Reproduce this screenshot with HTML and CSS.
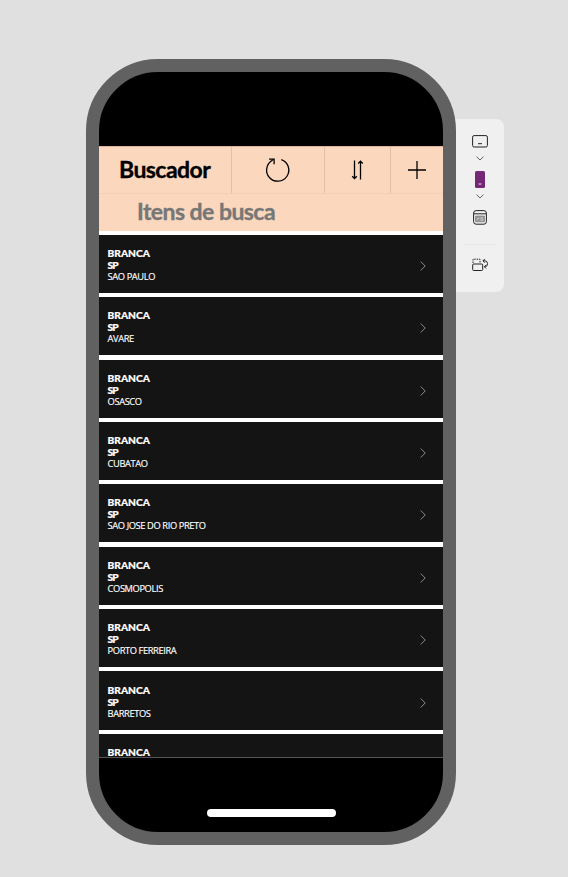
FILE: index.html
```
<!DOCTYPE html>
<html lang="pt-BR">
<head>
<meta charset="utf-8">
<title>Buscador</title>
<link rel="stylesheet" href="styles.css">
</head>
<body>
<main class="stage">
  <section class="phone">
    <header class="toolbar">
      <h1 class="title">Buscador</h1>
      <button class="tool refresh" aria-label="Atualizar"><svg width="28" height="28" viewBox="0 0 28 28"><path d="M8.7 4.2A11.1 11.1 0 1 0 17.3 3.6M5.1 3.1H10.1V8.3"/></svg></button>
      <button class="tool sort" aria-label="Ordenar"><svg width="14" height="22" viewBox="0 0 14 22"><path d="M4.500 1.500V19.200M2.200 17.200L4.500 19.500L6.800 17.200M10.500 20.500V2.500M8.200 4.500L10.500 2.200L12.800 4.500"/></svg></button>
      <button class="tool add" aria-label="Adicionar"><svg width="20" height="20" viewBox="0 0 20 20"><path d="M10 1V19M1 10H19"/></svg></button>
    </header>
    <div class="search">Itens de busca</div>
    <div class="list">
      <article class="row"><div><h2>BRANCA</h2><h3>SP</h3><p>SAO PAULO</p></div><svg class="next" viewBox="0 0 6 10"><path d="M.7.5L5.200 5L.7 9.500"/></svg></article>
      <article class="row"><div><h2>BRANCA</h2><h3>SP</h3><p>AVARE</p></div><svg class="next" viewBox="0 0 6 10"><path d="M.7.5L5.200 5L.7 9.500"/></svg></article>
      <article class="row"><div><h2>BRANCA</h2><h3>SP</h3><p>OSASCO</p></div><svg class="next" viewBox="0 0 6 10"><path d="M.7.5L5.200 5L.7 9.500"/></svg></article>
      <article class="row"><div><h2>BRANCA</h2><h3>SP</h3><p>CUBATAO</p></div><svg class="next" viewBox="0 0 6 10"><path d="M.7.5L5.200 5L.7 9.500"/></svg></article>
      <article class="row"><div><h2>BRANCA</h2><h3>SP</h3><p>SAO JOSE DO RIO PRETO</p></div><svg class="next" viewBox="0 0 6 10"><path d="M.7.5L5.200 5L.7 9.500"/></svg></article>
      <article class="row"><div><h2>BRANCA</h2><h3>SP</h3><p>COSMOPOLIS</p></div><svg class="next" viewBox="0 0 6 10"><path d="M.7.5L5.200 5L.7 9.500"/></svg></article>
      <article class="row"><div><h2>BRANCA</h2><h3>SP</h3><p>PORTO FERREIRA</p></div><svg class="next" viewBox="0 0 6 10"><path d="M.7.5L5.200 5L.7 9.500"/></svg></article>
      <article class="row"><div><h2>BRANCA</h2><h3>SP</h3><p>BARRETOS</p></div><svg class="next" viewBox="0 0 6 10"><path d="M.7.5L5.200 5L.7 9.500"/></svg></article>
      <article class="row"><div><h2>BRANCA</h2></div></article>
    </div>
    <footer class="home"><span></span></footer>
  </section>
  <aside class="devices">
    <svg class="tablet" width="16" height="13" viewBox="0 0 16 13"><rect x=".6" y=".6" width="14.800" height="11.400" rx="1.500"/><path d="M6 8.700H10"/></svg>
    <svg class="chev" width="8" height="5" viewBox="0 0 8 5"><path d="M.5.6L4 4L7.500.6"/></svg>
    <svg class="mobile" width="10" height="17" viewBox="0 0 10 17"><rect width="10" height="17" rx="1.500"/><path d="M3.600 13H6.400"/></svg>
    <svg class="chev second" width="8" height="5" viewBox="0 0 8 5"><path d="M.5.6L4 4L7.500.6"/></svg>
    <svg class="custom" width="14" height="15" viewBox="0 0 14 15"><rect x=".6" y=".6" width="12.800" height="13.600" rx="2.500"/><path d="M1 3.800H13"/><path class="panel" d="M2.500 6H11.500V11.800H2.500Z"/><path class="detail" d="M4 9.500L6 8M7.500 8H10M7.500 10H10"/></svg>
    <hr>
    <svg class="rotate" width="17" height="14" viewBox="0 0 17 14"><rect x=".7" y="6" width="10" height="6.500" rx="1"/><path class="dash" d="M1 5V1.200H8V5"/><path d="M11 2.800H13A2.700 3 0 0 1 13.500 8.700H12.500M12.800.9L11 2.800L12.800 4.700M14.200 7L12.300 8.700L14 10.400"/></svg>
  </aside>
</main>
</body>
</html>
```
FILE: styles.css
```
* { box-sizing: border-box; }
body { margin: 0; background: #e0e0e0; font-family: "Open Sans", sans-serif; }
.stage { display: flex; align-items: flex-start; width: 568px; height: 877px; padding: 59.300px 0 0 86px; overflow: hidden; }
.phone { width: 370px; height: 785.400px; flex: none; border: 13px solid #616161; border-radius: 72px; background: #000; overflow: hidden; padding-top: 74px; position: relative; z-index: 1; }
svg { fill: none; stroke: #222; stroke-width: 1; flex: none; display: block; }
.toolbar { display: grid; grid-template-columns: 132px 93px 66px 1fr; height: 47.500px; background: #fbd7bd; border-top: 1px solid #d8b59c; border-bottom: 1px solid #f2cfb6; }
.title { margin: 0; padding-left: 20px; font: 700 23px/45px Lato, sans-serif; letter-spacing: -.55px; -webkit-text-stroke: .35px; color: #000; }
.tool { border: 0; border-left: 1px solid #e2bfa7; padding: 0; background: none; display: flex; align-items: center; justify-content: center; }
.tool svg { stroke: #000; stroke-width: 1.300; }
.sort svg { margin-right: 1px; }
.add svg { margin-right: 1px; }
.search { height: 37.500px; background: #fbd7bd; padding-left: 38px; font: 700 23px/35px Lato, sans-serif; letter-spacing: -.55px; -webkit-text-stroke: .35px; color: #777; }
.list { height: 526.500px; overflow: hidden; display: flex; flex-direction: column; gap: 4.200px; padding-top: 3.500px; background: #fff; border-bottom: 1px solid #555; }
.row { height: 58.200px; flex: none; display: flex; justify-content: space-between; background: #141414; color: #fff; padding: 12.200px 17px 0 8.600px; }
.row h2, .row h3, .row p { margin: 0; height: 12px; line-height: 12px; white-space: nowrap; }
.row h2 { font: 900 10.200px/12px Lato, sans-serif; -webkit-text-stroke: .2px; }
.row h3 { font: 900 10.200px/12px Lato, sans-serif; letter-spacing: -1px; -webkit-text-stroke: .2px; }
.row p { font-size: 9.300px; letter-spacing: -.39px; -webkit-text-stroke: .15px; }
.next { width: 6px; height: 10px; margin-top: 14px; stroke: #999; stroke-width: .9; }
.home { display: flex; justify-content: center; padding-top: 51.500px; }
.home span { width: 129px; height: 8px; border-radius: 4px; background: #fff; }
.devices { width: 60px; height: 173px; margin: 60.200px 0 0 -12px; padding: 16px 0 0 12px; border-radius: 0 8px 8px 0; background: #f0f0f0; display: flex; flex-direction: column; align-items: center; }
.devices .chev { margin-top: 8px; stroke: #666; }
.mobile { margin-top: 10px; fill: #742774; stroke: #eee; }
.mobile rect { stroke: none; }
.devices .second { margin-top: 6px; }
.custom { margin-top: 11px; }
.custom .panel { fill: #999; stroke: #777; stroke-width: .6; }
.custom .detail { stroke: #e5e5e5; stroke-width: .8; }
.devices hr { width: 32px; height: 1px; border: 0; background: #e5e5e5; margin: 19px 0 0; }
.rotate { margin-top: 13px; }
.dash { stroke-dasharray: 1.500 1; }
```
